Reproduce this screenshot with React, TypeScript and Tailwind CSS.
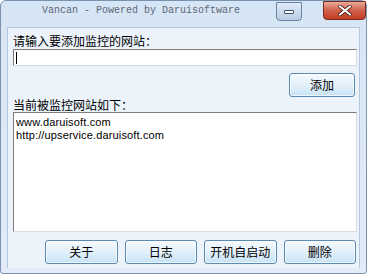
import React from "react";

const cjk = { fontFamily: '"Noto Sans CJK SC", "Liberation Sans", sans-serif' };

function Btn({ label, className = "" }: { label: string; className?: string }) {
  return (
    <div
      className={
        "h-[24px] flex items-center justify-center rounded-[3px] border border-[#5a8aaf] bg-gradient-to-b from-[#f4f9fe] via-[#e3f0fa] to-[#c6e2f5] text-[12px] text-black shadow-[inset_0_0_0_1px_rgba(255,255,255,0.7)] " +
        className
      }
      style={cjk}
    >
      {label}
    </div>
  );
}

export default function App() {
  return (
    <div className="w-[372px] h-[278px] bg-white">
      <div className="w-[367px] h-[274px] rounded-t-[6px] rounded-b-[3px] border border-[#7a93ae] bg-gradient-to-b from-[#d6e5f5] to-[#e2ecf8] flex flex-col">
        {/* title bar */}
        <div className="h-[26px] flex items-start relative">
          <div
            className="absolute left-[41px] top-[3px] text-[10px] leading-[14px] text-[#5c6877] whitespace-pre"
            style={{ fontFamily: '"Liberation Mono", monospace' }}
          >
            Vancan - Powered by Daruisoftware
          </div>
          <div className="absolute left-[275px] top-[1px] w-[26px] h-[19px] rounded-b-[4px] border border-[#6b84a1] bg-gradient-to-b from-[#dfeaf6] to-[#b9cde4] flex items-center justify-center">
            <div className="w-[10px] h-[4px] bg-white border border-[#3b4e66] rounded-[1px]" />
          </div>
          <div className="absolute left-[322px] top-[0px] w-[43px] h-[19px] rounded-b-[4px] border border-[#7a2b20] bg-gradient-to-b from-[#e9a99c] via-[#d0604a] to-[#c23c22] flex items-center justify-center">
            <svg width="14" height="11" viewBox="0 0 14 11">
              <path d="M2 1.5 L12 9.5 M12 1.5 L2 9.5" stroke="#4a1a12" strokeWidth="3.6" strokeLinecap="round" />
              <path d="M2 1.5 L12 9.5 M12 1.5 L2 9.5" stroke="#ffffff" strokeWidth="2.2" strokeLinecap="round" />
            </svg>
          </div>
        </div>
        {/* client */}
        <div className="mx-[6px] h-[241px] bg-[#edf3fb] border-x border-t border-[#b4c6dc] flex flex-col pl-[5px] pr-[3px] pt-[5px]" style={cjk}>
          <div className="h-[16px] text-[12px] leading-[16px] text-black">请输入要添加监控的网站：</div>
          <div className="h-[17px] w-[344px] bg-white border-t border-l border-[#7b7b7b] border-r border-b border-r-[#d8dde3] border-b-[#d8dde3] flex items-center pl-[2px]">
            <div className="w-[1px] h-[12px] bg-black" />
          </div>
          <div className="flex justify-end pr-[1px] mt-[7px]">
            <Btn label="添加" className="w-[66px]" />
          </div>
          <div className="h-[15px] text-[12px] leading-[15px] text-black">当前被监控网站如下：</div>
          <div
            className="h-[120px] w-[344px] bg-white border-t border-l border-[#7b7b7b] border-r border-b border-r-[#d8dde3] border-b-[#d8dde3] pl-[2px] pt-[3px] text-[11px] leading-[13px] tracking-[0.15px] text-black"
            style={{ fontFamily: '"Liberation Sans", sans-serif' }}
          >
            <div>www.daruisoft.com</div>
            <div>http://upservice.daruisoft.com</div>
          </div>
          <div className="flex gap-[7px] mt-[8px] pl-[32px]">
            <Btn label="关于" className="w-[74px]" />
            <Btn label="日志" className="w-[74px]" />
            <Btn label="开机自启动" className="w-[74px]" />
            <Btn label="删除" className="w-[74px]" />
          </div>
        </div>
      </div>
    </div>
  );
}
